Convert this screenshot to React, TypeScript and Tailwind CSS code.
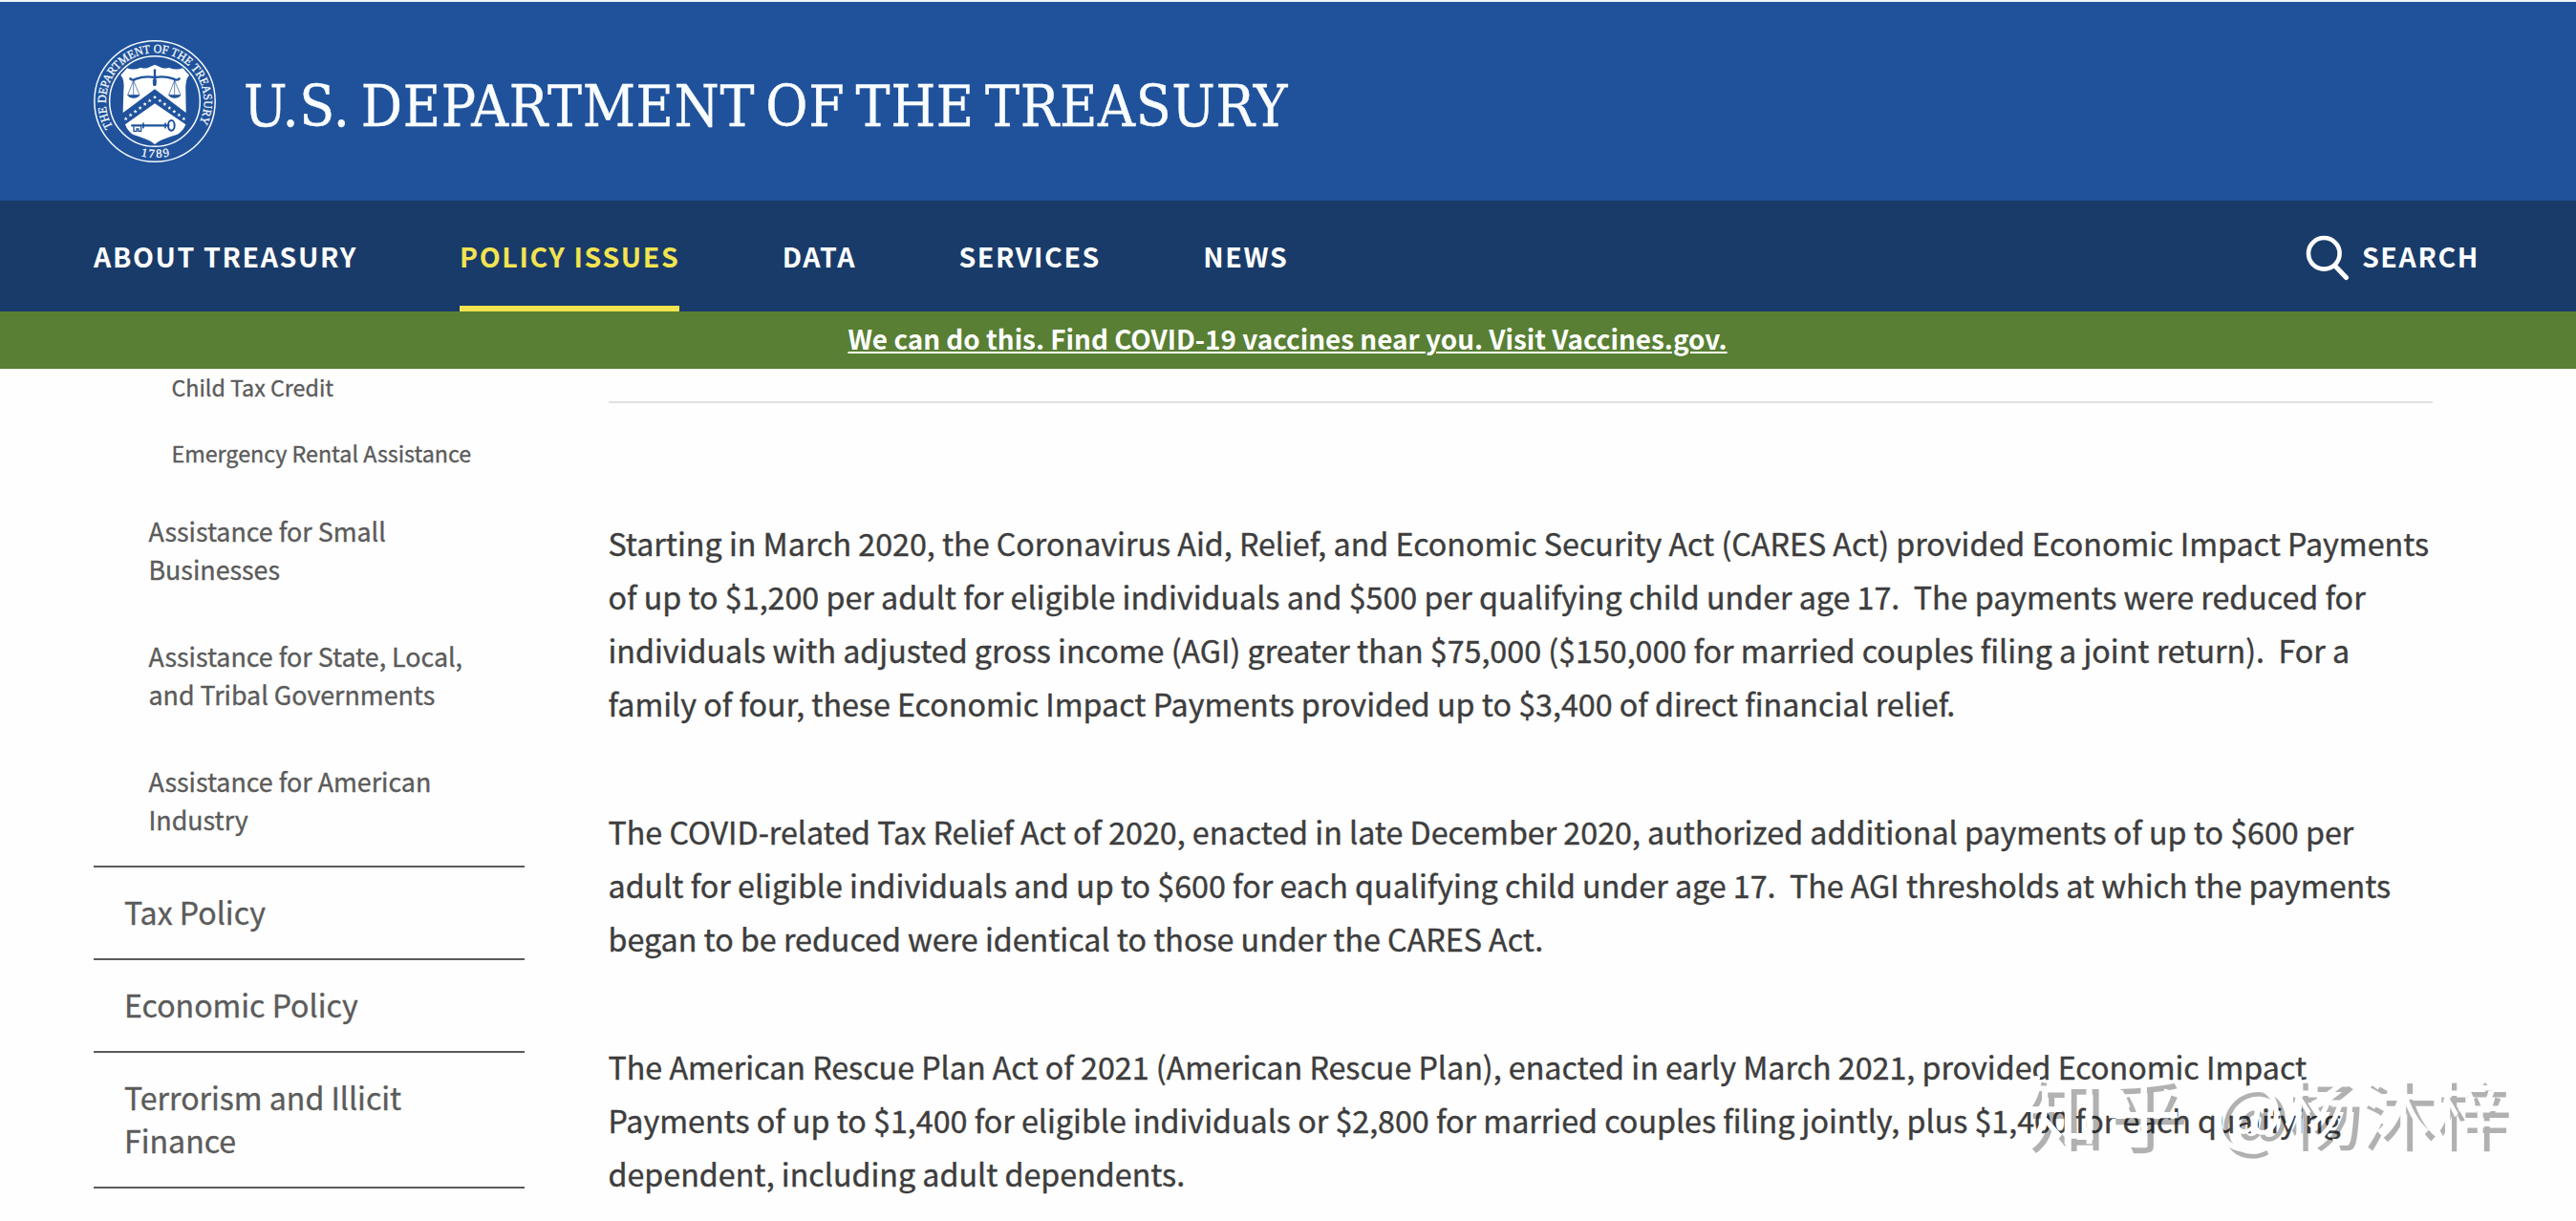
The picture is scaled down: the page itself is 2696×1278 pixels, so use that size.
const sans = "font-['Noto_Sans_CJK_SC','Noto_Sans',sans-serif]";

const seats = [
  [156, 312], [171, 300], [186, 289], [201, 278], [216, 266], [231, 255], [247, 244],
  [263, 255], [278, 266], [293, 278], [308, 289], [323, 300], [338, 312],
];

function Seal() {
  return (
    <svg viewBox="55 66 384 384" className="size-32 shrink-0" fill="none" aria-label="Treasury seal">
      <defs>
        <path id="rimTop" d="M115 338 A154 154 0 1 1 387 325" />
        <path id="rimBottom" d="M187 424 A176 176 0 0 0 310 424" />
      </defs>
      <circle cx="247" cy="258" r="189.500" stroke="#f4fafd" strokeWidth="4.500" />
      <circle cx="247" cy="258" r="142" stroke="#f4fafd" strokeWidth="4.500" />
      <text fill="#f4fafd" stroke="#f4fafd" strokeWidth="0.9" fontSize="38" className="font-['Liberation_Serif',serif]">
        <textPath href="#rimTop" textLength="634" lengthAdjust="spacingAndGlyphs">
          THE DEPARTMENT OF THE TREASURY
        </textPath>
      </text>
      <text fill="#f4fafd" stroke="#f4fafd" strokeWidth="0.9" fontSize="38" className="font-['Liberation_Serif',serif]">
        <textPath href="#rimBottom" startOffset="17" textLength="92">
          1789
        </textPath>
      </text>
      <path
        d="M160 154 Q180 162 203 152 Q218 158 230 151 L247 143 L264 151 Q276 158 291 152 Q314 162 335 154 L355 176 Q342 190 344 225 L345 294 L247 220 L147 294 L149 225 Q153 190 140 176 Z"
        fill="#fff"
      />
      <path d="M247 265 L344 331 Q336 352 318 362 Q290 370 272 378 Q256 384 247 393 Q238 384 222 378 Q204 370 178 362 Q162 352 154 331 Z" fill="#fff" />
      <g fill="#f4fafd">
        {seats.map(([x, y]) => (
          <path key={x} d={`M${x} ${y - 5} l2 4 h4 l-3 3 l1 4 l-4 -2 l-4 2 l1 -4 l-3 -3 h4 Z`} />
        ))}
      </g>
      <g stroke="#20529c" strokeLinecap="round">
        <path d="M170 187 Q178 195 190 187 Q215 178 247 183 Q279 178 304 187 Q316 195 324 187" strokeWidth="7" />
        <path d="M247 160 V206" strokeWidth="7" />
        <path d="M243 190 h8 l-1 18 h-6 Z" fill="#20529c" strokeWidth="3" />
        <path d="M180 193 L163 236 M180 193 V236 M180 193 L198 236 M309 193 L292 236 M309 193 V236 M309 193 L327 236" strokeWidth="2" />
        <path d="M161 238 H200 Q195 248 180 248 Q166 248 161 238 Z M290 238 H329 Q324 248 309 248 Q295 248 290 238 Z" fill="#20529c" strokeWidth="1" />
        <path d="M176 334 H290" strokeWidth="7" />
        <path d="M211 327 V341 M280 327 V341" strokeWidth="5" />
        <ellipse cx="299" cy="334" rx="10" ry="16" strokeWidth="6" />
        <path d="M181 338 V352 H190 V345 H196 V352 H204 V338" strokeWidth="4" />
      </g>
    </svg>
  );
}

function SearchIcon() {
  return (
    <svg viewBox="0 0 48 48" className="size-12 shrink-0" fill="none" stroke="#fff" aria-hidden="true">
      <circle cx="19.300" cy="19.300" r="16.300" strokeWidth="4.600" />
      <path d="M31 32.500 L42.500 44.500" strokeWidth="5" strokeLinecap="round" />
    </svg>
  );
}

const navItems = ["ABOUT TREASURY", "POLICY ISSUES", "DATA", "SERVICES", "NEWS"];
const topics = ["Tax Policy", "Economic Policy", "Terrorism and Illicit Finance"];

function Header() {
  return (
    <header>
      <div className="h-0.5 bg-[#eef6f9]" />
      <div className="flex h-[208px] items-center bg-[#20529c] pl-[98px]">
        <Seal />
        <h1 className="ml-[29px] pt-[10px] text-[60px] leading-[70px] tracking-[0.62px] [word-spacing:-6.5px] [-webkit-text-stroke:0.4px_#fafdff] whitespace-nowrap text-[#fafdff] font-['DejaVu_Serif_Condensed','DejaVu_Serif',serif]">
          U.S. DEPARTMENT OF THE TREASURY
        </h1>
      </div>
      <nav className="flex h-[116px] items-stretch justify-between bg-[#193b69] pr-[101px] pl-[98px] text-[28.55px] leading-[42px] font-bold tracking-[1.6px] text-white">
        <ul className="flex gap-[107.300px]">
          {navItems.map((item) => (
            <li
              key={item}
              className={
                item === "POLICY ISSUES"
                  ? "flex items-center border-b-[6px] border-[#f3e450] pt-[5px] text-[#f3e450]"
                  : "flex items-center border-b-[6px] border-transparent pt-[5px]"
              }
            >
              {item}
            </li>
          ))}
        </ul>
        <div className="flex items-center gap-[11px]">
          <div className="pt-1"><SearchIcon /></div>
          <span>SEARCH</span>
        </div>
      </nav>
      <div className="flex h-[60px] justify-center bg-[#587f33] pt-[7px]">
        <a className="pr-px text-[27.87px] leading-[42px] font-bold whitespace-nowrap text-white underline decoration-[2px] underline-offset-[2px] [text-decoration-skip-ink:auto]">
          We can do this. Find COVID-19 vaccines near you. Visit Vaccines.gov.
        </a>
      </div>
    </header>
  );
}

function Sidebar() {
  return (
    <aside className="w-[451px] shrink-0 text-[#5b5b5b] [-webkit-text-stroke:0.35px_#5b5b5b]">
      <ul className="flex flex-col gap-[33px] pt-px pl-[81.500px] text-[23.25px] leading-9">
        <li>Child Tax Credit</li>
        <li>Emergency Rental Assistance</li>
      </ul>
      <ul className="flex flex-col gap-[51px] border-b-2 border-[#5b5b5b] pt-[44px] pb-[28px] pl-[57.500px] text-[26.8px] leading-[40px]">
        <li>Assistance for Small<br />Businesses</li>
        <li>Assistance for State, Local,<br />and Tribal Governments</li>
        <li>Assistance for American<br />Industry</li>
      </ul>
      <ul>
        {topics.map((topic) => (
          <li key={topic} className="border-b-2 border-[#5b5b5b] pt-[24px] pr-[100px] pb-[26.400px] pl-[32px] text-[32.1px] leading-[44.600px]">
            {topic}
          </li>
        ))}
      </ul>
    </aside>
  );
}

function Article() {
  return (
    <main className="w-[1909px] pt-[34px] text-[#3d3d3d]">
      <hr className="mb-[118px] border-t-2 border-[#e0e0e0]" />
      <div className="-ml-[0.5px] text-[32.23px] leading-[56px] whitespace-nowrap [-webkit-text-stroke:0.4px_#3d3d3d]">
        <p className="mb-[78px]">
          Starting in March 2020, the Coronavirus Aid, Relief, and Economic Security Act (CARES Act) provided Economic Impact Payments<br />
          of up to $1,200 per adult for eligible individuals and $500 per qualifying child under age 17.&nbsp; The payments were reduced for<br />
          individuals with adjusted gross income (AGI) greater than $75,000 ($150,000 for married couples filing a joint return).&nbsp; For a<br />
          family of four, these Economic Impact Payments provided up to $3,400 of direct financial relief.
        </p>
        <p className="mb-[78px]">
          The COVID-related Tax Relief Act of 2020, enacted in late December 2020, authorized additional payments of up to $600 per<br />
          adult for eligible individuals and up to $600 for each qualifying child under age 17.&nbsp; The AGI thresholds at which the payments<br />
          began to be reduced were identical to those under the CARES Act.
        </p>
        <p>
          The American Rescue Plan Act of 2021 (American Rescue Plan), enacted in early March 2021, provided Economic Impact<br />
          Payments of up to $1,400 for eligible individuals or $2,800 for married couples filing jointly, plus $1,400 for each qualifying<br />
          dependent, including adult dependents.
        </p>
      </div>
    </main>
  );
}

export default function App() {
  return (
    <div className={`relative h-[1278px] w-[2696px] overflow-hidden bg-[#fefefe] ${sans}`}>
      <Header />
      <div className="flex gap-[88px] pl-[98px]">
        <Sidebar />
        <Article />
      </div>
      <div className="absolute top-[1119px] left-[2117px] flex leading-[78px] whitespace-nowrap text-[#fefefe] [text-shadow:7px_7px_0_rgba(0,0,0,0.3)]">
        <span className="w-[199px] text-[80px] tracking-[6px]">知乎</span>
        <span className="text-[77.5px]">@杨沐梓</span>
      </div>
    </div>
  );
}
